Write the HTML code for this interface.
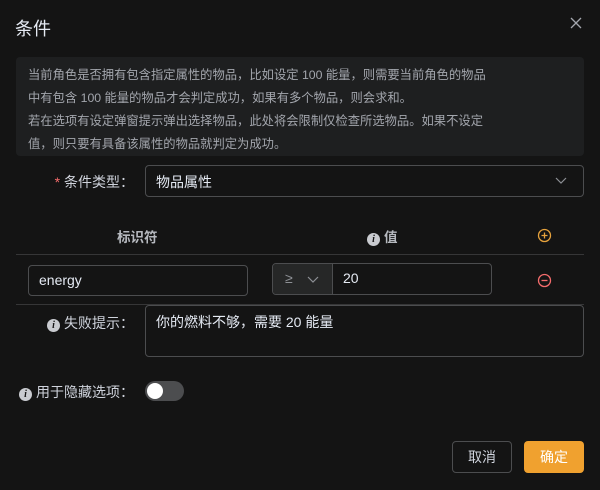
<!DOCTYPE html>
<html><head><meta charset="utf-8"><style>
*{box-sizing:border-box;margin:0;padding:0}
body{width:600px;height:490px;background:#141414;font-family:"Liberation Sans","Noto Sans CJK SC",sans-serif;color:#cfd3dc;position:relative;overflow:hidden;font-size:14px}
.a{position:absolute}
.title{left:15px;top:15px;font-size:18px;color:#e5eaf3}
.notice{left:16px;top:57px;width:568px;height:99px;background:#1e1f20;border-radius:4px;padding:7px 12px;font-size:12.3px;line-height:23px;color:#a3a6ad;white-space:nowrap}
.lbl{font-size:14px;color:#cfd3dc;text-align:right;width:134px;left:0}
.box{border:1px solid #4c4d4f;border-radius:4px;background:#141414}
.info{display:inline-block;width:13px;height:13px;border-radius:50%;background:#c9cbd0;color:#141414;font-size:10px;font-weight:bold;font-style:italic;text-align:center;line-height:13px;font-family:"Liberation Serif",serif;vertical-align:0px;margin-right:4px}
.hd{font-size:13.5px;font-weight:bold;color:#b6b9bf}
</style></head><body>
<div class="a title">条件</div>
<svg class="a" style="left:569px;top:16px" width="14" height="14"><path d="M2 2L12 12M12 2L2 12" stroke="#a3a6ad" stroke-width="1.3"/></svg>
<div class="a notice">当前角色是否拥有包含指定属性的物品，比如设定 100 能量，则需要当前角色的物品<br>中有包含 100 能量的物品才会判定成功，如果有多个物品，则会求和。<br>若在选项有设定弹窗提示弹出选择物品，此处将会限制仅检查所选物品。如果不设定<br>值，则只要有具备该属性的物品就判定为成功。</div>
<div class="a lbl" style="top:172px"><span style="color:#f56c6c">*</span> 条件类型：</div>
<div class="a box" style="left:145px;top:165px;width:439px;height:32px;padding:6px 10px;font-size:14px;color:#e5eaf3">物品属性</div>
<svg class="a" style="left:555px;top:176px" width="12" height="10"><path d="M1 2L6 7L11 2" stroke="#8d9095" stroke-width="1.2" fill="none"/></svg>
<div class="a hd" style="left:117px;top:226px">标识符</div>
<div class="a hd" style="left:367px;top:226px"><span class="info">i</span>值</div>
<svg class="a" style="left:537px;top:228px" width="15" height="15"><circle cx="7.5" cy="7.5" r="6" stroke="#e6a23c" stroke-width="1.3" fill="none"/><path d="M4.5 7.5H10.5M7.5 4.5V10.5" stroke="#e6a23c" stroke-width="1.3"/></svg>
<div class="a" style="left:16px;top:254px;width:568px;height:1px;background:#363637"></div>
<div class="a box" style="left:28px;top:265px;width:220px;height:31px;padding:6px 10px;color:#e5eaf3">energy</div>
<div class="a box" style="left:272px;top:263px;width:220px;height:32px;"></div>
<div class="a" style="left:273px;top:264px;width:60px;height:30px;background:#262727;border-right:1px solid #4c4d4f;border-radius:3px 0 0 3px;color:#8d9095;padding:6px 12px">≥</div>
<svg class="a" style="left:307px;top:275px" width="12" height="10"><path d="M1 2L6 7L11 2" stroke="#8d9095" stroke-width="1.2" fill="none"/></svg>
<div class="a" style="left:343px;top:270px;color:#e5eaf3">20</div>
<svg class="a" style="left:537px;top:273px" width="15" height="15"><circle cx="7.5" cy="7.5" r="6" stroke="#f56c6c" stroke-width="1.3" fill="none"/><path d="M4.5 7.5H10.5" stroke="#f56c6c" stroke-width="1.3"/></svg>
<div class="a" style="left:16px;top:304px;width:568px;height:1px;background:#363637"></div>
<div class="a lbl" style="top:313px"><span class="info">i</span>失败提示：</div>
<div class="a box" style="left:145px;top:305px;width:439px;height:52px;padding:6px 10px;color:#e5eaf3">你的燃料不够，需要 20 能量</div>
<div class="a lbl" style="top:382px"><span class="info">i</span>用于隐藏选项：</div>
<div class="a" style="left:145px;top:381px;width:39px;height:20px;border-radius:10px;background:#4c4d4f"></div>
<div class="a" style="left:147px;top:383px;width:16px;height:16px;border-radius:50%;background:#fff"></div>
<div class="a box" style="left:452px;top:441px;width:60px;height:32px;text-align:center;line-height:30px;color:#cfd3dc">取消</div>
<div class="a" style="left:524px;top:441px;width:60px;height:32px;background:#f0a12f;border-radius:4px;text-align:center;line-height:32px;color:#fff">确定</div>
</body></html>
